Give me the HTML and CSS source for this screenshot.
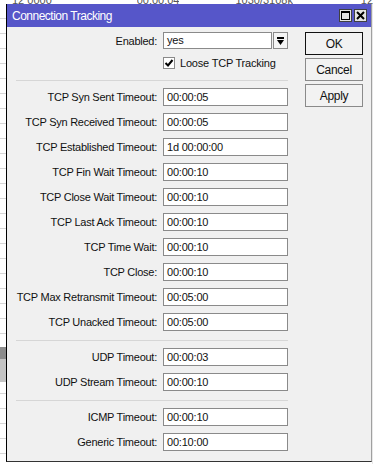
FILE: index.html
```html
<!DOCTYPE html>
<html lang="en">

<head>
    <meta charset="UTF-8">
    <meta name="viewport" content="width=device-width, initial-scale=1.0">
    <title>Connection Tracking</title>
    <link rel="stylesheet" href="styles.css">
</head>

<body>

    <div class="desk">
        <!-- table behind the dialog, only its edges show -->
        <div class="behindTop">
            <span class="c1">12 0000</span>
            <span class="c2">00:00:04</span>
            <span class="c3">1030/3108k</span>
            <span class="c4">12</span>
        </div>

        <div class="deskRow">
            <div class="behindLeft"></div>

            <div class="window">
                <div class="titleBar">
                    <span class="title">Connection Tracking</span>
                    <span class="titleButtons">
                        <span class="tbButton">
                            <svg width="9" height="9" viewBox="0 0 9 9">
                                <rect x="0.5" y="0.5" width="8" height="8" fill="none" stroke="#000" />
                                <rect x="0" y="0" width="9" height="2" fill="#000" />
                            </svg>
                        </span>
                        <span class="tbButton">
                            <svg width="9" height="9" viewBox="0 0 9 9">
                                <path d="M1 1 L8 8 M8 1 L1 8" stroke="#000" stroke-width="2" />
                            </svg>
                        </span>
                    </span>
                </div>

                <div class="dialogBody">
                    <div class="form">
                        <div class="configItem enabledItem">
                            <label>Enabled:</label>
                            <div class="combo">
                                <span class="field comboField">yes</span>
                                <span class="dropButton">
                                    <svg width="7" height="8" viewBox="0 0 7 8">
                                        <rect x="0" y="0" width="7" height="2" fill="#000" />
                                        <polygon points="0,3 7,3 3.5,8" fill="#000" />
                                    </svg>
                                </span>
                            </div>
                        </div>

                        <div class="checkItem">
                            <span class="checkbox">
                                <svg width="10" height="10" viewBox="0 0 10 10">
                                    <path d="M1.5 5 L4 7.5 L8.5 2" fill="none" stroke="#000" stroke-width="2" />
                                </svg>
                            </span>
                            <span>Loose TCP Tracking</span>
                        </div>

                        <hr>

                        <div class="configItem"><label>TCP Syn Sent Timeout:</label><span class="field">00:00:05</span></div>
                        <div class="configItem"><label>TCP Syn Received Timeout:</label><span class="field">00:00:05</span></div>
                        <div class="configItem"><label>TCP Established Timeout:</label><span class="field">1d 00:00:00</span></div>
                        <div class="configItem"><label>TCP Fin Wait Timeout:</label><span class="field">00:00:10</span></div>
                        <div class="configItem"><label>TCP Close Wait Timeout:</label><span class="field">00:00:10</span></div>
                        <div class="configItem"><label>TCP Last Ack Timeout:</label><span class="field">00:00:10</span></div>
                        <div class="configItem"><label>TCP Time Wait:</label><span class="field">00:00:10</span></div>
                        <div class="configItem"><label>TCP Close:</label><span class="field">00:00:10</span></div>
                        <div class="configItem"><label>TCP Max Retransmit Timeout:</label><span class="field">00:05:00</span></div>
                        <div class="configItem"><label>TCP Unacked Timeout:</label><span class="field">00:05:00</span></div>

                        <hr class="groupLine">

                        <div class="configItem"><label>UDP Timeout:</label><span class="field">00:00:03</span></div>
                        <div class="configItem"><label>UDP Stream Timeout:</label><span class="field">00:00:10</span></div>

                        <hr class="groupLine">

                        <div class="configItem"><label>ICMP Timeout:</label><span class="field">00:00:10</span></div>
                        <div class="configItem"><label>Generic Timeout:</label><span class="field">00:10:00</span></div>
                    </div>

                    <div class="buttons">
                        <button class="okButton">OK</button>
                        <button>Cancel</button>
                        <button>Apply</button>
                    </div>
                </div>
            </div>

            <div class="behindRight"></div>
        </div>
    </div>

</body>

</html>
```

FILE: styles.css
```css
body {
    margin: 0;
    background-color: #ffffff;
    font-family: "Liberation Sans", Arial, sans-serif;
    font-size: 11px;
    color: #111;
}

.desk {
    width: 373px;
    height: 464px;
    overflow: hidden;
}

.behindTop {
    height: 4px;
    overflow: hidden;
    display: flex;
    color: #555;
}

/* only the feet of the letters peek out above the dialog */
.behindTop span {
    display: block;
    height: 4px;
    overflow: hidden;
    line-height: 0;
    white-space: nowrap;
}

.c1 {
    margin-left: 12px;
}

.c2 {
    margin-left: 85px;
}

.c3 {
    margin-left: 56px;
}

.c4 {
    margin-left: 68px;
}

.deskRow {
    display: flex;
}

.behindLeft {
    width: 6px;
    height: 460px;
    background:
        linear-gradient(to bottom, transparent 343px, #8c8c8c 343px, #8c8c8c 355px, #c4c4c4 355px, #c4c4c4 378px, transparent 378px),
        repeating-linear-gradient(to bottom, transparent 0, transparent 14px, #d6d6d6 14px, #d6d6d6 15px);
}

.behindRight {
    width: 1px;
    background-color: #e8e8e8;
}

.window {
    width: 364px;
    height: 457px;
    border-left: 1px solid #000;
    border-right: 1px solid #a0a0a0;
    border-bottom: 1px solid #333;
    background-color: #f0f0f0;
    display: flex;
    flex-direction: column;
}

.titleBar {
    height: 23px;
    background-color: #5656c9;
    color: #fff;
    display: flex;
    align-items: center;
    justify-content: space-between;
    padding: 0 4px 0 5px;
    font-size: 12px;
    letter-spacing: -0.5px;
}

.title {
    padding-top: 1px;
}

.titleButtons {
    display: flex;
    gap: 2px;
}

.tbButton {
    width: 11px;
    height: 11px;
    border: 1px solid #404040;
    background-color: #e4e4e4;
    display: flex;
    align-items: center;
    justify-content: center;
}

.dialogBody {
    display: flex;
    padding: 5px 0 0 9px;
}

.form {
    width: 272px;
}

.configItem {
    display: flex;
    align-items: center;
    height: 18px;
    margin-top: 7px;
}

.configItem label {
    width: 141px;
    margin-right: 6px;
    text-align: right;
    letter-spacing: -0.25px;
    white-space: nowrap;
}

.enabledItem {
    margin-top: 0;
    height: 17px;
}

.field {
    box-sizing: border-box;
    width: 125px;
    height: 18px;
    border: 1px solid #8a8a8a;
    background-color: #fff;
    padding-left: 3px;
    line-height: 16px;
    letter-spacing: -0.2px;
}

.combo {
    display: flex;
    gap: 1px;
}

.comboField {
    width: 109px;
    height: 17px;
    line-height: 15px;
}

.dropButton {
    box-sizing: border-box;
    width: 15px;
    height: 17px;
    border: 1px solid #8a8a8a;
    background-color: #f4f4f4;
    display: flex;
    align-items: center;
    justify-content: center;
}

.checkItem {
    display: flex;
    align-items: center;
    height: 12px;
    margin-top: 8px;
    padding-left: 147px;
    letter-spacing: -0.2px;
}

.checkbox {
    box-sizing: border-box;
    width: 12px;
    height: 12px;
    border: 1px solid #8a8a8a;
    background-color: #fff;
    margin-right: 5px;
    display: flex;
    align-items: center;
    justify-content: center;
}

hr {
    border: none;
    border-top: 1px solid #d6d6d6;
    height: 0;
    margin: 11px 0 0 0;
}

.groupLine {
    margin-top: 9px;
}

hr + .configItem {
    margin-top: 7px;
}

.buttons {
    display: flex;
    flex-direction: column;
    gap: 3px;
    margin-left: 17px;
}

button {
    box-sizing: border-box;
    width: 58px;
    height: 23px;
    border: 1px solid #8a8a8a;
    background-color: #f2f2f2;
    font-family: "Liberation Sans", Arial, sans-serif;
    font-size: 12px;
    letter-spacing: -0.3px;
    color: #111;
    padding: 0;
    cursor: pointer;
}

.okButton {
    border-color: #111;
}
```
